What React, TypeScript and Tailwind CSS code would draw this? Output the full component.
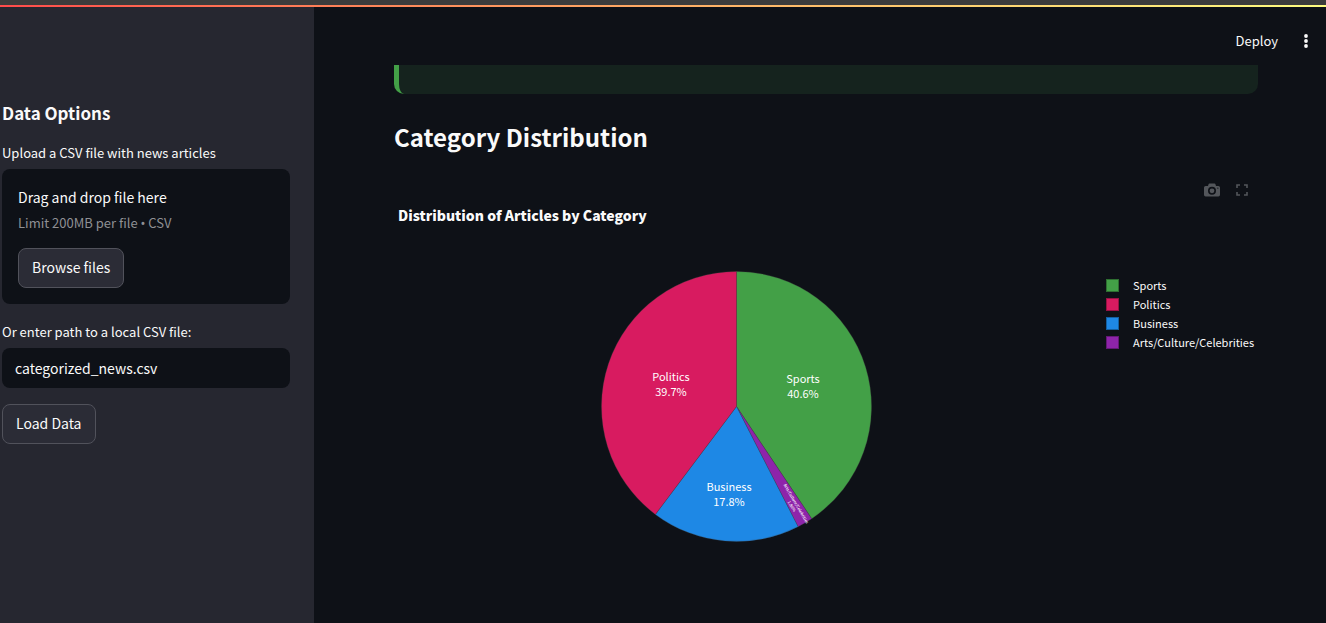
import React, { useState } from "react";

type Slice = {
  name: string;
  percent: number;
  label: string;
  color: string;
  swatch: string;
  x: number;
  y: number;
};

const slices: Slice[] = [
  { name: "Sports", percent: 40.6, label: "40.6%", color: "#43a047", swatch: "bg-[#43a047]", x: 202, y: 112 },
  { name: "Arts/Culture/Celebrities", percent: 1.86, label: "1.86%", color: "#8e24aa", swatch: "bg-[#8e24aa]", x: 193, y: 233 },
  { name: "Business", percent: 17.8, label: "17.8%", color: "#1e88e5", swatch: "bg-[#1e88e5]", x: 128, y: 220 },
  { name: "Politics", percent: 39.74, label: "39.7%", color: "#d81b60", swatch: "bg-[#d81b60]", x: 70, y: 110 },
];

const legend = [slices[0], slices[3], slices[2], slices[1]];

const CENTER = 135.5;
const RADIUS = 135;

function point(percent: number) {
  const angle = (percent / 100) * Math.PI * 2;
  return `${(CENTER + RADIUS * Math.sin(angle)).toFixed(2)} ${(CENTER - RADIUS * Math.cos(angle)).toFixed(2)}`;
}

function PieChart() {
  let start = 0;
  return (
    <svg width="271" height="271" viewBox="0 0 271 271" role="img" aria-label="Distribution of Articles by Category">
      {slices.map((slice) => {
        const from = start;
        start += slice.percent;
        return (
          <path
            key={slice.name}
            d={`M${CENTER} ${CENTER}L${point(from)}A${RADIUS} ${RADIUS} 0 0 1 ${point(start)}Z`}
            fill={slice.color}
            stroke="#444444"
            strokeWidth="0.3"
          />
        );
      })}
      {slices.map((slice) =>
        slice.name.startsWith("Arts") ? (
          <g
            key={slice.name}
            transform="translate(193 234) rotate(59.6)"
            fill="#ffffff"
            textAnchor="middle"
            fontSize="4"
            fontWeight="500"
          >
            <text x="0" y="-1">{slice.name}</text>
            <text x="0" y="4">{slice.label}</text>
          </g>
        ) : (
          <g key={slice.name} fill="#ffffff" textAnchor="middle" fontSize="11">
            <text x={slice.x} y={slice.y}>{slice.name}</text>
            <text x={slice.x} y={slice.y + 15}>{slice.label}</text>
          </g>
        ),
      )}
    </svg>
  );
}

function Sidebar() {
  const [path, setPath] = useState("categorized_news.csv");
  return (
    <aside className="w-[314px] shrink-0 bg-[#262730] pt-[94px] pr-6 pl-0.5">
      <h2 className="text-[17px] leading-6 font-bold">Data Options</h2>
      <p id="upload-label" className="mt-[18px] text-[13px] leading-5">Upload a CSV file with news articles</p>
      <section aria-labelledby="upload-label" className="mt-1.5 rounded-lg bg-[#0e1117] p-4">
        <p className="text-[14px] leading-6">Drag and drop file here</p>
        <p className="mt-1 text-[13px] leading-5 text-[#8f9094]">
          Limit 200MB per file <span className="font-['Noto_Sans']">•</span> CSV
        </p>
        <button type="button" className="mt-[15px] block h-10 rounded-lg border border-[#51525b] bg-[#2b2c36] px-[13px] pb-0.5 text-[14px]">
          Browse files
        </button>
      </section>
      <label htmlFor="csv-path" className="mt-[18px] block text-[13px] leading-5">Or enter path to a local CSV file:</label>
      <input
        id="csv-path"
        value={path}
        onChange={(event) => setPath(event.target.value)}
        className="mt-1.5 block h-10 w-full rounded-lg bg-[#0e1117] px-[13px] text-[14px] outline-none"
      />
      <button type="button" className="mt-4 h-10 rounded-lg border border-[#51525b] bg-[#2b2c36] px-[13px] pb-0.5 text-[14px]">
        Load Data
      </button>
    </aside>
  );
}

export default function App() {
  return (
    <div className="flex min-h-screen flex-col bg-[#0e1117] font-['Noto_Sans_CJK_SC','Noto_Sans',sans-serif] text-[#fafafa]">
      <div className="h-[5px] bg-[#3c3c3c]" />
      <div className="h-0.5 bg-linear-to-r from-[#ff4b4b] to-[#fffd80]" />
      <div className="flex flex-1">
        <Sidebar />
        <main className="min-w-0 flex-1">
          <header className="flex h-[58px] items-center justify-end gap-5 pt-2.5 pr-3">
            <button type="button" className="text-[13px] leading-5">Deploy</button>
            <button type="button" aria-label="Main menu">
              <svg width="16" height="16" viewBox="0 0 16 16" fill="currentColor">
                <circle cx="8" cy="3" r="1.9" />
                <circle cx="8" cy="8" r="1.9" />
                <circle cx="8" cy="13" r="1.9" />
              </svg>
            </button>
          </header>
          <div className="pr-[68px] pl-20">
            <div className="h-[29px] rounded-b-[10px] border-l-[5px] border-[#43a047] bg-[#15231e]" />
            <h1 className="mt-[23px] text-[24px] leading-10 font-bold">Category Distribution</h1>
            <div className="mt-[25px] flex h-4 items-center justify-end gap-4 pr-2.5 text-[#53565b]">
              <button type="button" aria-label="Download plot as a png">
                <svg width="16" height="16" viewBox="0 0 1000 1000" fill="currentColor">
                  <path d="M500 400a150 150 0 1 0 0 300 150 150 0 0 0 0-300zm400-150H750L710 130a60 60 0 0 0-50-40H340a60 60 0 0 0-50 40l-40 120H100A100 100 0 0 0 0 350v450a100 100 0 0 0 100 100h800a100 100 0 0 0 100-100V350a100 100 0 0 0-100-100zM500 800a250 250 0 1 1 0-500 250 250 0 0 1 0 500zm365-380a35 35 0 1 1 0-70 35 35 0 0 1 0 70z" />
                </svg>
              </button>
              <button type="button" aria-label="Fullscreen">
                <svg width="12" height="12" viewBox="0 0 12 12" fill="none" stroke="currentColor" strokeWidth="1.6">
                  <path d="M1 4V1h3M8 1h3v3M11 8v3H8M4 11H1V8" />
                </svg>
              </button>
            </div>
            <h2 className="mt-[7px] pl-1 text-[14px] leading-5 font-black">Distribution of Articles by Category</h2>
            <div className="mt-[46px] flex items-start">
              <div className="flex flex-1 justify-center">
                <PieChart />
              </div>
              <ul className="mt-[5px] ml-[27px] w-[152px] text-[11px] leading-[19px]">
                {legend.map((item) => (
                  <li key={item.name} className="flex items-center gap-3.5 whitespace-nowrap">
                    <span className={`size-[13px] shrink-0 border border-black/30 ${item.swatch}`} />
                    {item.name}
                  </li>
                ))}
              </ul>
            </div>
          </div>
        </main>
      </div>
    </div>
  );
}
